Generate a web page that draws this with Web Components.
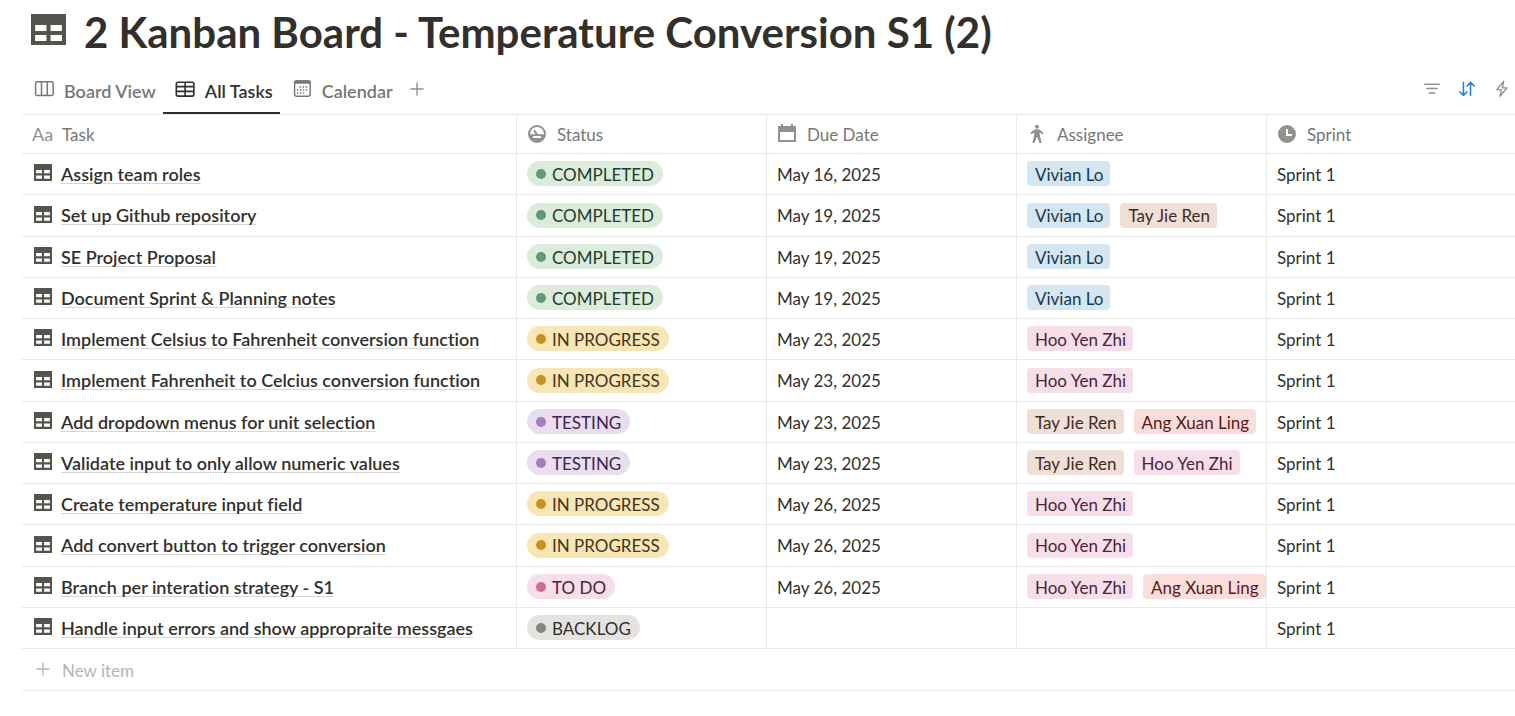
<!DOCTYPE html>
<html lang="en">
<head>
<meta charset="utf-8">
<title>2 Kanban Board - Temperature Conversion S1 (2)</title>
<style>
  body {
    margin: 0;
    background: #fff;
    color: #32302c;
    font-family: Lato, "Noto Sans", sans-serif;
    font-size: 17px;
    line-height: 24px;
    font-variant-ligatures: none;
    --line: #e9e9e7;
    --muted: #787774;
    --icon: #91918e;
    --faint: #b6b5b2;
    --ink: #32302c;
    --solid: #55534e;
  }
</style>
</head>
<body>
<task-database></task-database>

<script>
const ICONS = {
  table: { box: '0 0 34 31', art: '<path fill="currentColor" fill-rule="evenodd" d="M0 0h34v31H0zM4 11v6h11v-6zM19 11v6h11v-6zM4 21v6h11v-6zM19 21v6h11v-6z"/>' },
  board: { box: '0 0 20 20', art: '<g fill="none" stroke="currentColor" stroke-width="1.5"><rect x="1.6" y="2.8" width="17.6" height="13.6" rx="1.6"/><path d="M7.5 2.8v13.6M13.300 2.800v13.600"/></g>' },
  grid: { box: '0 0 20 20', art: '<g fill="none" stroke="currentColor" stroke-width="1.6"><rect x="1.3" y="3.3" width="17.6" height="13.8" rx="1.8"/><path d="M1.3 7.6h17.6M1.3 12.4h17.6M10.1 3.3v13.8"/></g>' },
  month: { box: '0 0 20 20', art: '<rect x="2.6" y="2" width="15.6" height="15.2" rx="2" fill="none" stroke="currentColor" stroke-width="1.4"/><path fill="currentColor" d="M2 3.4Q2 1.200 4.200 1.200h12.400q2.300 0 2.300 2.200v1.400H2z"/><path stroke="currentColor" stroke-width="1.5" stroke-dasharray="1.5 1.5" d="M7.6 8h7.5M4.8 11h10.4M4.8 14h7.4"/>' },
  plus: { box: '0 0 14 14', art: '<path fill="none" stroke="currentColor" stroke-width="1.4" d="M7 .5v13M.5 7h13"/>' },
  filter: { box: '0 0 20 20', art: '<path fill="none" stroke="currentColor" stroke-width="1.5" stroke-linecap="round" d="M2.7 5.2h14.6M5 9.600h10M7.300 14h5.400"/>' },
  sort: { box: '0 0 20 20', art: '<path fill="none" stroke="currentColor" stroke-width="1.6" stroke-linecap="round" stroke-linejoin="round" d="M6.4 3.2v13.2M2.8 12.8l3.6 3.7 3.6-3.7M13.5 16.4V3.4M10 7l3.5-3.7L17.1 7"/>' },
  bolt: { box: '0 0 20 20', art: '<path fill="none" stroke="currentColor" stroke-width="1.4" stroke-linejoin="round" d="M11.7 2.3 4.9 10.6h4.5L8 17.2l7-8.3h-4.6z"/>' },
  gauge: { box: '0 0 20 20', art: '<path fill="currentColor" fill-rule="evenodd" d="M10 1a9 9 0 1 1 0 18 9 9 0 0 1 0-18zM10 2.9a7 7 0 0 0-7 7.3h5.2L6.6 6.4l1.2-.8 3.3 4.6H17A7 7 0 0 0 10 2.900zM6 12v2h8v-2z"/>' },
  date: { box: '0 0 20 20', art: '<path fill="currentColor" fill-rule="evenodd" d="M1 2h3V0h2v2h8V0h2v2h3v16H1zM3 8v8h14V8z"/>' },
  person: { box: '0 0 20 20', art: '<circle cx="10" cy="2.8" r="2" fill="currentColor"/><path fill="currentColor" d="M7.6 5.4h4.8l4.3 3.5-1.1 1.4-3-1.9.5 4 1.6 6.6h-2.2L10.2 13h-.4L7.5 19H5.3l1.6-6.6.5-4-3 1.9-1.1-1.400z"/>' },
  clock: { box: '0 0 20 20', art: '<path fill="currentColor" fill-rule="evenodd" d="M10 1a9 9 0 1 1 0 18 9 9 0 0 1 0-18zM9 5v7h6v-2h-4V5z"/>' }
};

function define(name, css, html) {
  const template = document.createElement('template');
  template.innerHTML = `<style>${css}</style>${html}`;
  customElements.define(name, class extends HTMLElement {
    constructor() {
      super();
      this.attachShadow({ mode: 'open' }).append(template.content.cloneNode(true));
    }
  });
}

customElements.define('ui-icon', class extends HTMLElement {
  connectedCallback() {
    if (this.shadowRoot) return;
    const icon = ICONS[this.getAttribute('name')];
    this.attachShadow({ mode: 'open' }).innerHTML = `
      <style>
        :host { display: block; flex: none; width: 20px; height: 20px; }
        svg { display: block; width: 100%; height: 100%; }
      </style>
      <svg viewBox="${icon.box}" preserveAspectRatio="none" aria-hidden="true">${icon.art}</svg>`;
  }
});

define('status-pill', `
  :host { display: inline-flex; align-items: center; gap: 6px; height: 25px; padding: 2px 9px 0; border-radius: 13px; white-space: nowrap;
    background: #dbecdd; color: #1f3d2c; --dot: #5e9a76; box-sizing: border-box; }
  :host([tone=yellow]) { background: #f8e6b6; color: #46331c; --dot: #c98f1f; }
  :host([tone=purple]) { background: #e8deee; color: #412454; --dot: #a57bc3; }
  :host([tone=pink]) { background: #f6dfe9; color: #4c2337; --dot: #cf6b99; }
  :host([tone=gray]) { background: #e4e3df; color: #32302c; --dot: #868580; }
  i { width: 10px; height: 10px; margin-bottom: 2px; border-radius: 50%; background: var(--dot); }
`, '<i></i><slot></slot>');

define('person-tag', `
  :host { display: inline-flex; flex: none; align-items: center; height: 25px; padding: 2px 7px 0 8px; border-radius: 4px; white-space: nowrap;
    background: #d3e6f1; color: #1b3850; box-sizing: border-box; }
  :host([tone=brown]) { background: #efdfd7; color: #442a1e; }
  :host([tone=pink]) { background: #f6dfe9; color: #4c2337; }
  :host([tone=red]) { background: #fbdedb; color: #5d1715; }
`, '<slot></slot>');

define('page-link', `
  :host { display: block; }
  a { display: flex; align-items: center; gap: 9px; color: var(--ink); font-size: 18px; font-weight: 600; white-space: nowrap; text-decoration: none; }
  ui-icon { width: 18px; height: 17px; color: var(--solid); margin-bottom: 2px; }
  span { text-decoration: underline 1px #d8d7d4; text-underline-offset: 2px; text-decoration-skip-ink: none; }
`, '<a href="#"><ui-icon name="table"></ui-icon><span><slot></slot></span></a>');

customElements.define('view-tab', class extends HTMLElement {
  connectedCallback() {
    if (this.shadowRoot) return;
    const selected = this.hasAttribute('selected');
    this.attachShadow({ mode: 'open' }).innerHTML = `
      <style>
        :host { display: flex; color: var(--muted); }
        :host([selected]) { color: var(--ink); }
        button { display: flex; align-items: center; gap: 10px; padding: 2px 7px 0 12px; border: 0; border-bottom: 2px solid transparent;
          background: none; font: inherit; font-size: 18px; font-weight: 600; color: inherit; white-space: nowrap; }
        :host([selected]) button { border-bottom-color: currentColor; }
        ui-icon { margin-bottom: 4px; }
      </style>
      <button type="button" role="tab" aria-selected="${selected}"><ui-icon name="${this.getAttribute('icon')}"></ui-icon><slot></slot></button>`;
  }
});

customElements.define('icon-button', class extends HTMLElement {
  connectedCallback() {
    if (this.shadowRoot) return;
    this.attachShadow({ mode: 'open' }).innerHTML = `
      <style>
        :host { display: block; width: 20px; height: 20px; color: var(--icon); }
        :host([active]) { color: #2383e2; }
        button { display: block; width: 100%; height: 100%; padding: 0; border: 0; background: none; color: inherit; }
        ui-icon { width: 100%; height: 100%; }
      </style>
      <button type="button" aria-label="${this.getAttribute('label')}"><ui-icon name="${this.getAttribute('icon')}"></ui-icon></button>`;
  }
});

define('view-bar', `
  :host { display: flex; align-items: center; justify-content: space-between; height: 46px; padding-right: 3px; border-bottom: 1px solid var(--line); }
  nav { display: flex; align-self: stretch; align-items: center; }
  view-tab { align-self: stretch; }
  .add { width: 14px; height: 14px; margin: 0 0 4px 10px; }
  .tools { display: flex; gap: 15px; margin-bottom: 4px; }
`, `
  <nav role="tablist">
    <view-tab icon="board">Board View</view-tab>
    <view-tab icon="grid" selected>All Tasks</view-tab>
    <view-tab icon="month">Calendar</view-tab>
    <icon-button class="add" icon="plus" label="Add view"></icon-button>
  </nav>
  <div class="tools">
    <icon-button icon="filter" label="Filter"></icon-button>
    <icon-button icon="sort" label="Sort" active></icon-button>
    <icon-button icon="bolt" label="Automations"></icon-button>
  </div>`);

const TONES = { 'COMPLETED': 'green', 'IN PROGRESS': 'yellow', 'TESTING': 'purple', 'TO DO': 'pink', 'BACKLOG': 'gray',
  'Vivian Lo': 'blue', 'Tay Jie Ren': 'brown', 'Hoo Yen Zhi': 'pink', 'Ang Xuan Ling': 'red' };
const TASKS = [
  ['Assign team roles', 'COMPLETED', 'May 16, 2025', ['Vivian Lo']],
  ['Set up Github repository', 'COMPLETED', 'May 19, 2025', ['Vivian Lo', 'Tay Jie Ren']],
  ['SE Project Proposal', 'COMPLETED', 'May 19, 2025', ['Vivian Lo']],
  ['Document Sprint &amp; Planning notes', 'COMPLETED', 'May 19, 2025', ['Vivian Lo']],
  ['Implement Celsius to Fahrenheit conversion function', 'IN PROGRESS', 'May 23, 2025', ['Hoo Yen Zhi']],
  ['Implement Fahrenheit to Celcius conversion function', 'IN PROGRESS', 'May 23, 2025', ['Hoo Yen Zhi']],
  ['Add dropdown menus for unit selection', 'TESTING', 'May 23, 2025', ['Tay Jie Ren', 'Ang Xuan Ling']],
  ['Validate input to only allow numeric values', 'TESTING', 'May 23, 2025', ['Tay Jie Ren', 'Hoo Yen Zhi']],
  ['Create temperature input field', 'IN PROGRESS', 'May 26, 2025', ['Hoo Yen Zhi']],
  ['Add convert button to trigger conversion', 'IN PROGRESS', 'May 26, 2025', ['Hoo Yen Zhi']],
  ['Branch per interation strategy - S1', 'TO DO', 'May 26, 2025', ['Hoo Yen Zhi', 'Ang Xuan Ling']],
  ['Handle input errors and show appropraite messgaes', 'BACKLOG', '', []]
];
const tagFor = (element, text) => `<${element} tone="${TONES[text]}">${text}</${element}>`;
const rows = TASKS.map(([task, status, due, people]) => `
  <tr>
    <td class="task"><page-link>${task}</page-link></td>
    <td><div class="cell">${tagFor('status-pill', status)}</div></td>
    <td>${due}</td>
    <td><div class="cell">${people.map(p => tagFor('person-tag', p)).join('')}</div></td>
    <td>Sprint 1</td>
  </tr>`).join('');

define('task-table', `
  :host { display: block; }
  table { width: 100%; table-layout: fixed; border-collapse: separate; border-spacing: 0; }
  .c-task { width: 495px; }
  .c-field { width: 250px; }
  th, td { box-sizing: border-box; padding: 1px 0 0 10px; border-bottom: 1px solid var(--line); border-right: 1px solid var(--line);
    text-align: left; vertical-align: middle; white-space: nowrap; overflow: hidden; }
  th:last-child, td:last-child { border-right: 0; }
  th { height: 39px; font-weight: 400; color: var(--muted); }
  th > div { display: flex; align-items: center; gap: 10px; }
  th ui-icon { color: var(--icon); margin-bottom: 1px; }
  .aa { width: 20px; margin-bottom: 2px; font-size: 18px; color: var(--icon); }
  td { height: 41px; }
  tbody tr:nth-child(4n+2) td { height: 42px; }
  td.task { padding: 0 0 1px 12px; }
  .cell { display: flex; gap: 10px; padding-bottom: 2px; overflow: hidden; }
  .new { display: flex; align-items: center; gap: 12px; width: 100%; height: 42px; box-sizing: border-box; padding: 2px 0 0 14px; border: 0;
    border-bottom: 1px solid var(--line); background: none; font: inherit; color: var(--faint); text-align: left; }
  .new ui-icon { width: 14px; height: 14px; margin-bottom: 4px; }
`, `
  <table>
    <colgroup><col class="c-task"><col class="c-field"><col class="c-field"><col class="c-field"><col></colgroup>
    <thead><tr>
      <th scope="col"><div><span class="aa" aria-hidden="true">Aa</span>Task</div></th>
      <th scope="col"><div><ui-icon name="gauge"></ui-icon>Status</div></th>
      <th scope="col"><div><ui-icon name="date"></ui-icon>Due Date</div></th>
      <th scope="col"><div><ui-icon name="person"></ui-icon>Assignee</div></th>
      <th scope="col"><div><ui-icon name="clock"></ui-icon>Sprint</div></th>
    </tr></thead>
    <tbody>${rows}</tbody>
  </table>
  <button class="new" type="button"><ui-icon name="plus"></ui-icon>New item</button>`);

define('page-title', `
  :host { display: block; }
  h1 { display: flex; align-items: center; gap: 18px; height: 68px; margin: 0; padding: 0 0 4px 9px; box-sizing: border-box; font-size: 42px; line-height: 48px; font-weight: 700; white-space: nowrap; }
  ui-icon { width: 35px; height: 31px; color: var(--solid); margin-bottom: 5px; }
`, '<h1><ui-icon name="table"></ui-icon><slot></slot></h1>');

define('task-database', `
  :host { display: block; padding-left: 22px; }
`, `
  <page-title>2 Kanban Board - Temperature Conversion S1 (2)</page-title>
  <view-bar></view-bar>
  <task-table></task-table>`);
</script>
</body>
</html>
